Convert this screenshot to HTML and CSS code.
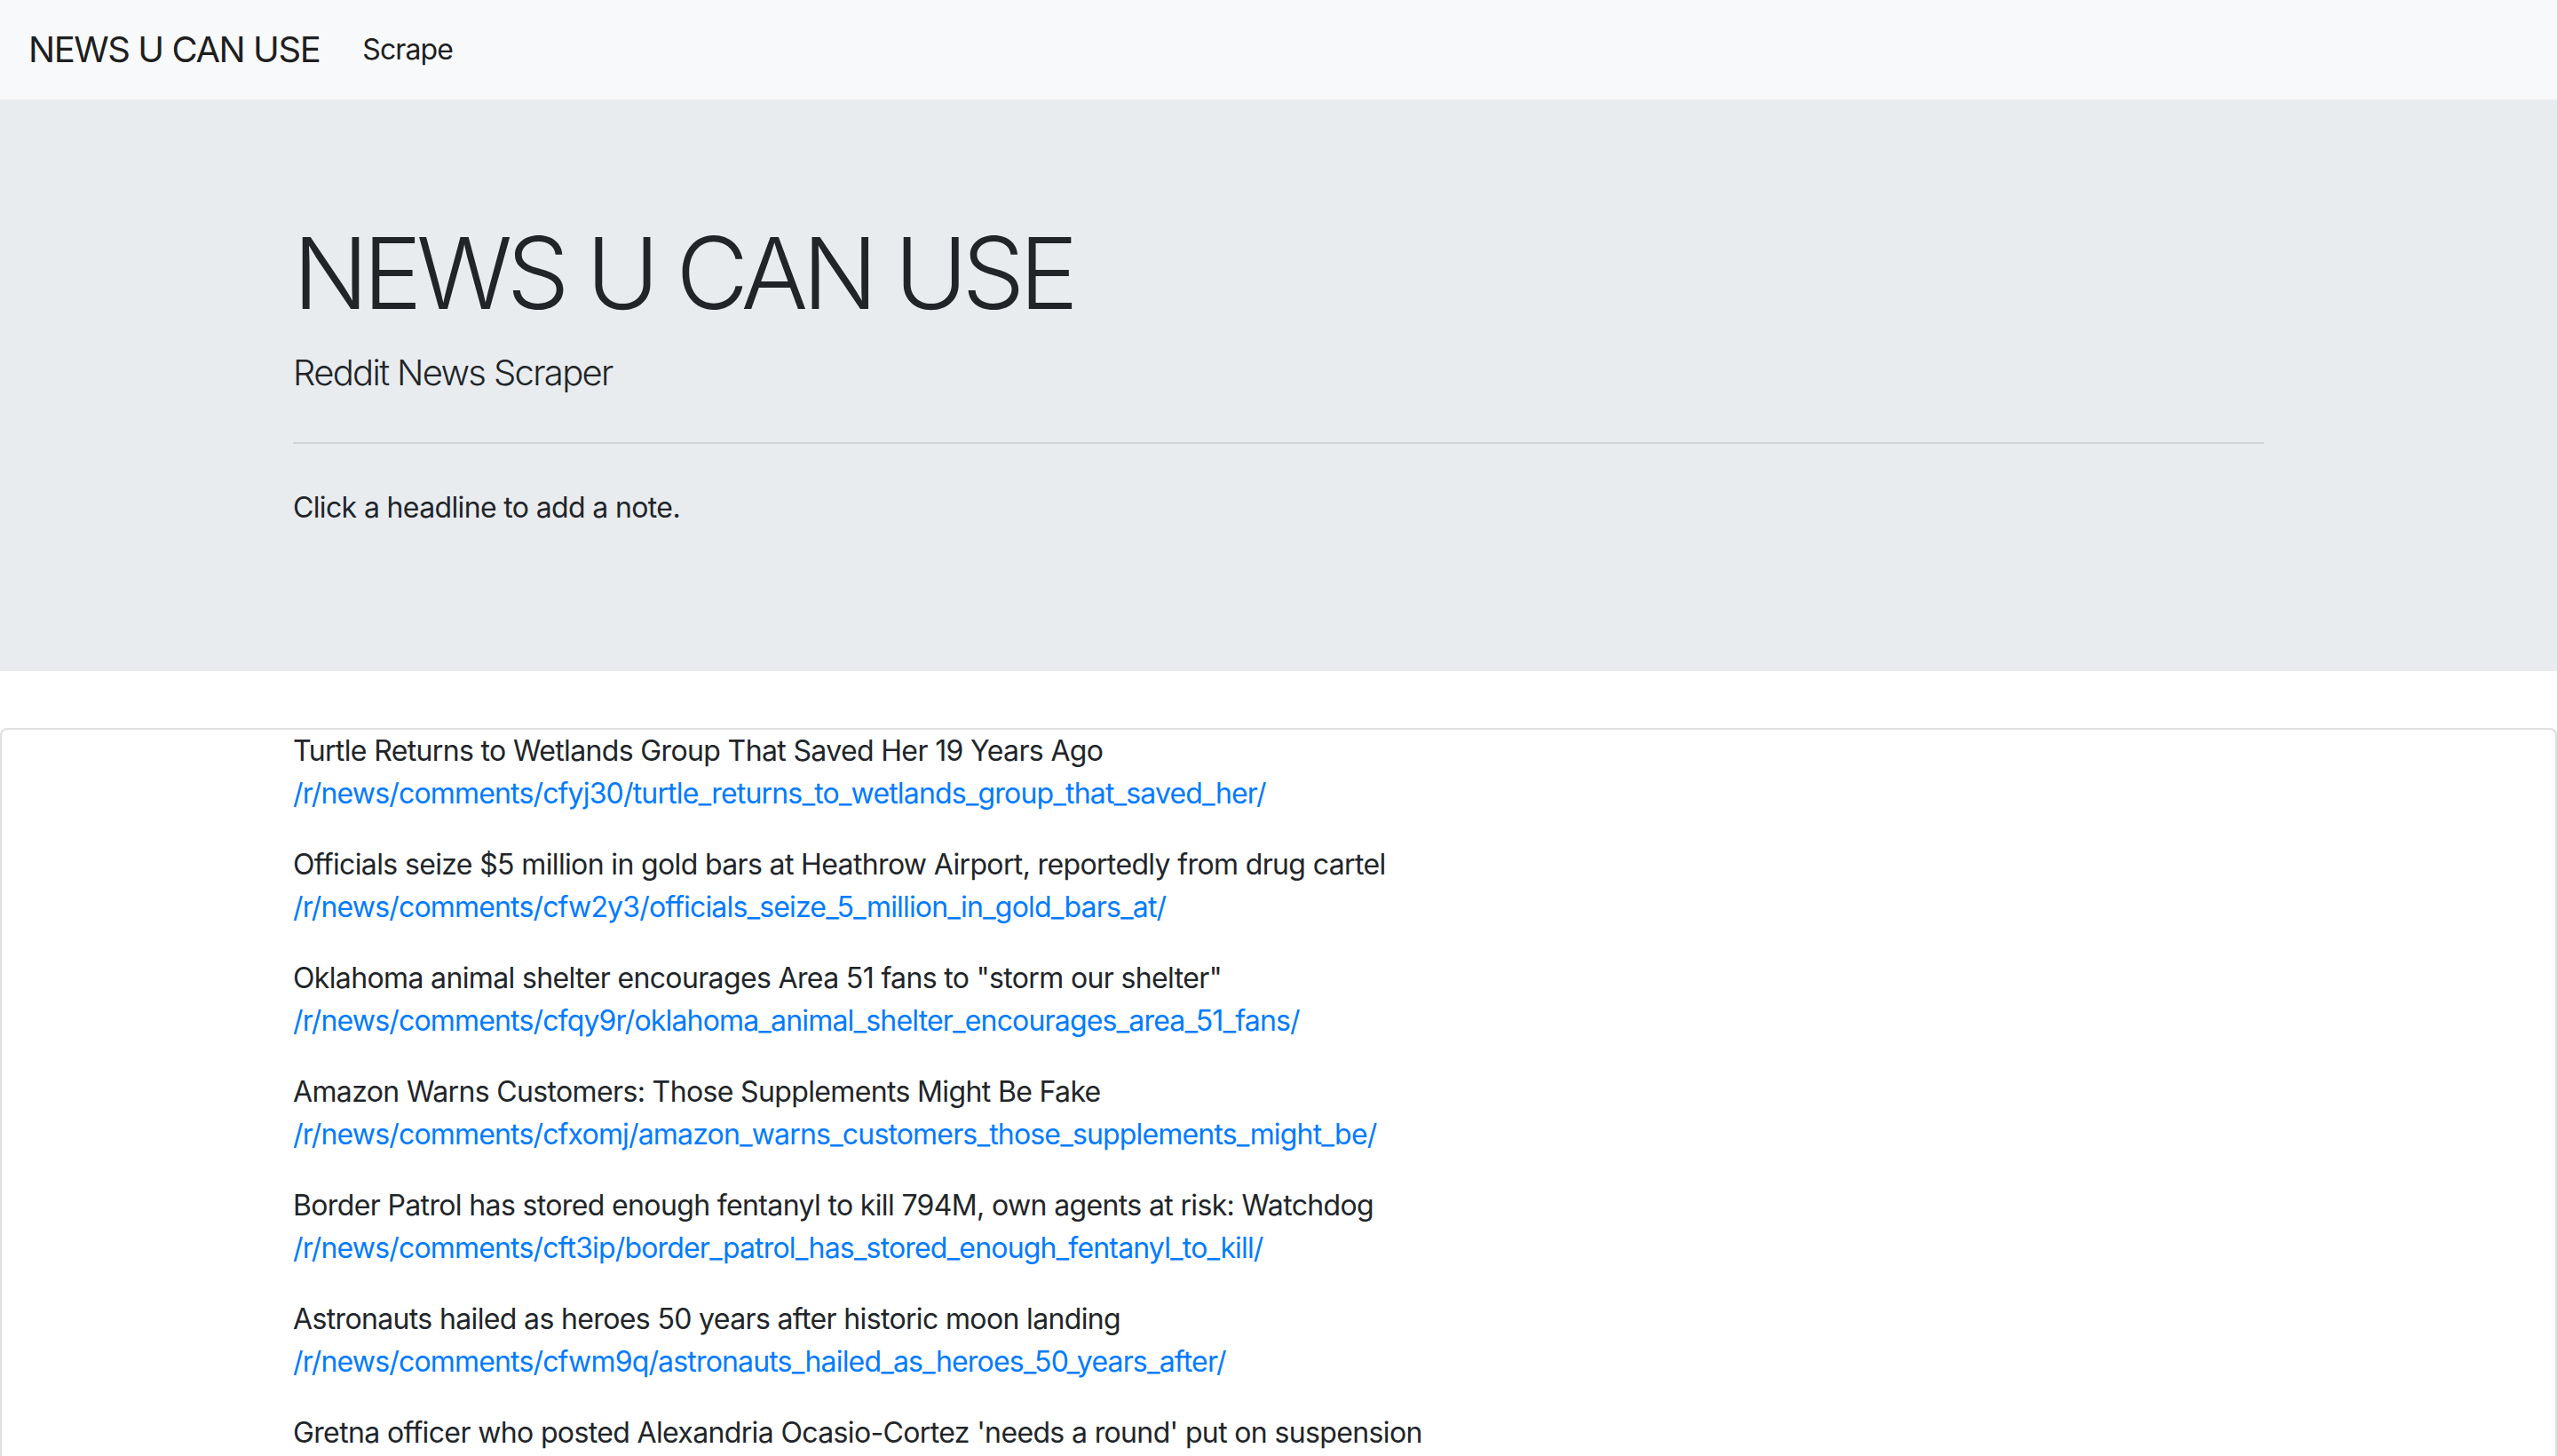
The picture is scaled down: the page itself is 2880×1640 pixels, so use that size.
FILE: index.html
```html
<!DOCTYPE html>
<html lang="en">
<head>
<meta charset="utf-8">
<title>NEWS U CAN USE</title>
<link rel="stylesheet" href="styles.css">
</head>
<body>
<nav class="navbar">
  <a class="navbar-brand" href="#">NEWS U CAN USE</a>
  <ul class="navbar-nav">
    <li class="nav-item"><a class="nav-link" href="#">Scrape</a></li>
  </ul>
</nav>

<header class="jumbotron">
  <div class="container">
    <h1 class="display-4">NEWS U CAN USE</h1>
    <p class="lead">Reddit News Scraper</p>
    <hr class="divider">
    <p class="note">Click a headline to add a note.</p>
  </div>
</header>

<main class="card">
  <div class="container">
    <div class="article">
      <p class="headline">Turtle Returns to Wetlands Group That Saved Her 19 Years Ago</p>
      <a class="article-link" href="#">/r/news/comments/cfyj30/turtle_returns_to_wetlands_group_that_saved_her/</a>
    </div>
    <div class="article">
      <p class="headline">Officials seize $5 million in gold bars at Heathrow Airport, reportedly from drug cartel</p>
      <a class="article-link" href="#">/r/news/comments/cfw2y3/officials_seize_5_million_in_gold_bars_at/</a>
    </div>
    <div class="article">
      <p class="headline">Oklahoma animal shelter encourages Area 51 fans to "storm our shelter"</p>
      <a class="article-link" href="#">/r/news/comments/cfqy9r/oklahoma_animal_shelter_encourages_area_51_fans/</a>
    </div>
    <div class="article">
      <p class="headline">Amazon Warns Customers: Those Supplements Might Be Fake</p>
      <a class="article-link" href="#">/r/news/comments/cfxomj/amazon_warns_customers_those_supplements_might_be/</a>
    </div>
    <div class="article">
      <p class="headline">Border Patrol has stored enough fentanyl to kill 794M, own agents at risk: Watchdog</p>
      <a class="article-link" href="#">/r/news/comments/cft3ip/border_patrol_has_stored_enough_fentanyl_to_kill/</a>
    </div>
    <div class="article">
      <p class="headline">Astronauts hailed as heroes 50 years after historic moon landing</p>
      <a class="article-link" href="#">/r/news/comments/cfwm9q/astronauts_hailed_as_heroes_50_years_after/</a>
    </div>
    <div class="article">
      <p class="headline">Gretna officer who posted Alexandria Ocasio-Cortez 'needs a round' put on suspension</p>
      <a class="article-link" href="#">/r/news/comments/cfx0lr/gretna_officer_who_posted_alexandria_ocasiocortez/</a>
    </div>
  </div>
</main>
</body>
</html>
```

FILE: styles.css
```css
* { box-sizing: border-box; }

html, body {
  margin: 0;
  padding: 0;
}

body {
  font-family: Inter, "Noto Sans", "Liberation Sans", sans-serif;
  font-size: 32px;
  line-height: 1.5;
  letter-spacing: -0.02em;
  color: #212529;
  background: #fff;
}

a { text-decoration: none; }

.navbar {
  display: flex;
  align-items: center;
  height: 112px;
  padding: 16px 32px;
  background: #f8f9fa;
}

.navbar-brand {
  font-size: 40px;
  line-height: 1.5;
  letter-spacing: -0.036em;
  padding: 10px 0;
  margin-right: 32px;
  color: rgba(0, 0, 0, 0.9);
  white-space: nowrap;
}

.navbar-nav {
  display: flex;
  list-style: none;
  margin: 0;
  padding: 0;
}

.nav-link {
  display: block;
  padding: 16px;
  letter-spacing: -0.028em;
  color: rgba(0, 0, 0, 0.9);
}

.jumbotron {
  background: #e9ecef;
  padding: 128px 0;
  margin-bottom: 64px;
}

.container {
  width: 2280px;
  margin: 0 auto;
  padding: 0 30px;
}

.display-4 {
  font-size: 112px;
  font-weight: 300;
  line-height: 1.2;
  letter-spacing: -0.057em;
  margin: 0 0 16px;
}

.lead {
  font-size: 40px;
  font-weight: 300;
  letter-spacing: -0.042em;
  margin: 0 0 32px;
}

.divider {
  margin: 48px 0;
  border: 0;
  border-top: 2px solid rgba(0, 0, 0, 0.1);
}

.note {
  margin: 0 0 32px;
}

.card {
  display: block;
  border: 2px solid rgba(0, 0, 0, 0.125);
  border-radius: 8px;
  background: #fff;
}

.article {
  margin-bottom: 32px;
}

.headline {
  margin: 0;
}

.article-link {
  display: block;
  letter-spacing: -0.026em;
  color: #007bff;
}
```
